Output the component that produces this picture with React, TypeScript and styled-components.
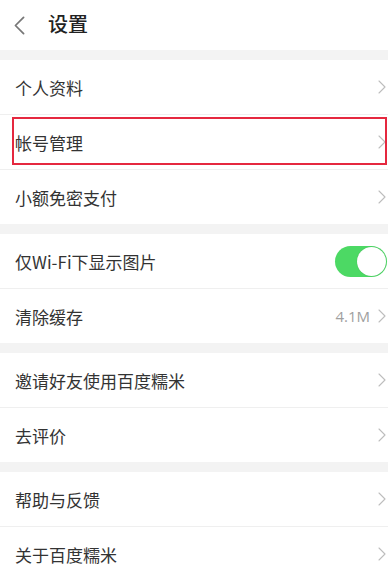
import React from "react";
import styled, { createGlobalStyle } from "styled-components";

const Global = createGlobalStyle`
  html, body { margin: 0; padding: 0; background: #f3f3f3; }
  body { font-family: "Noto Sans CJK SC", "Noto Sans", sans-serif; -webkit-font-smoothing: antialiased; }
  * { box-sizing: border-box; }
`;

const Page = styled.div`
  width: 388px;
  height: 576px;
  overflow: hidden;
  background: #f3f3f3;
  display: flex;
  flex-direction: column;
`;

const Header = styled.header`
  height: 50px;
  background: #fff;
  display: flex;
  align-items: center;
  padding-left: 14px;
  gap: 22px;
  flex-shrink: 0;
`;

const Title = styled.h1`
  margin: 0;
  font-size: 20px;
  font-weight: 500;
  color: #222;
  line-height: 1;
  padding-bottom: 2px;
`;

const Section = styled.section`
  background: #fff;
  margin-top: 10px;
  display: flex;
  flex-direction: column;
  flex-shrink: 0;
`;

const Row = styled.div<{ $divider?: boolean }>`
  position: relative;
  height: 54px;
  display: flex;
  align-items: center;
  padding: 0 2px 0 15px;
  border-top: ${(p) => (p.$divider ? "1px solid #efefef" : "none")};
  height: ${(p) => (p.$divider ? "55px" : "54px")};
`;

const Label = styled.span`
  flex: 1;
  font-size: 17px;
  color: #333;
  line-height: 1;
`;

const Value = styled.span`
  font-size: 15px;
  color: #a0a0a0;
  margin-right: 8px;
  font-family: "Open Sans", "Noto Sans", sans-serif;
`;

const Highlight = styled.div`
  position: absolute;
  left: 12px;
  right: 1px;
  top: 2px;
  bottom: 4px;
  border: 2px solid #e5283f;
  pointer-events: none;
`;

const Toggle = styled.div<{ $on: boolean }>`
  width: 52px;
  height: 31px;
  border-radius: 16px;
  background: ${(p) => (p.$on ? "#4cd964" : "#e5e5e5")};
  display: flex;
  align-items: center;
  justify-content: ${(p) => (p.$on ? "flex-end" : "flex-start")};
  padding: 1px;
  margin-right: -1px;
`;

const Knob = styled.div`
  width: 29px;
  height: 29px;
  border-radius: 50%;
  background: #fff;
  box-shadow: 0 0 1px rgba(0, 0, 0, 0.25);
`;

const Chevron = ({ size = 12, color = "#bdbdbd", left = false }: { size?: number; color?: string; left?: boolean }) => (
  <svg width={size / 2 + 2} height={size + 2} viewBox="0 0 8 14" fill="none">
    <path
      d={left ? "M7 1 L1 7 L7 13" : "M1 1 L7 7 L1 13"}
      stroke={color}
      strokeWidth={left ? 1.3 : 1.1}
      strokeLinecap="round"
      strokeLinejoin="round"
    />
  </svg>
);

const BackButton = styled.div`
  width: 12px;
  height: 20px;
  display: flex;
  align-items: center;
  svg { width: 11px; height: 19px; }
`;

type Item = { label: string; value?: string; toggle?: boolean; highlight?: boolean };

const sections: Item[][] = [
  [{ label: "个人资料" }, { label: "帐号管理", highlight: true }, { label: "小额免密支付" }],
  [{ label: "仅Wi-Fi下显示图片", toggle: true }, { label: "清除缓存", value: "4.1M" }],
  [{ label: "邀请好友使用百度糯米" }, { label: "去评价" }],
  [{ label: "帮助与反馈" }, { label: "关于百度糯米" }],
];

export default function App() {
  return (
    <>
      <Global />
      <Page>
        <Header>
          <BackButton>
            <Chevron left color="#777" size={18} />
          </BackButton>
          <Title>设置</Title>
        </Header>
        {sections.map((items, si) => (
          <Section key={si}>
            {items.map((it, i) => (
              <Row key={it.label} $divider={i > 0}>
                <Label>{it.label}</Label>
                {it.value && <Value>{it.value}</Value>}
                {it.toggle ? (
                  <Toggle $on>
                    <Knob />
                  </Toggle>
                ) : (
                  <Chevron />
                )}
                {it.highlight && <Highlight />}
              </Row>
            ))}
          </Section>
        ))}
      </Page>
    </>
  );
}
